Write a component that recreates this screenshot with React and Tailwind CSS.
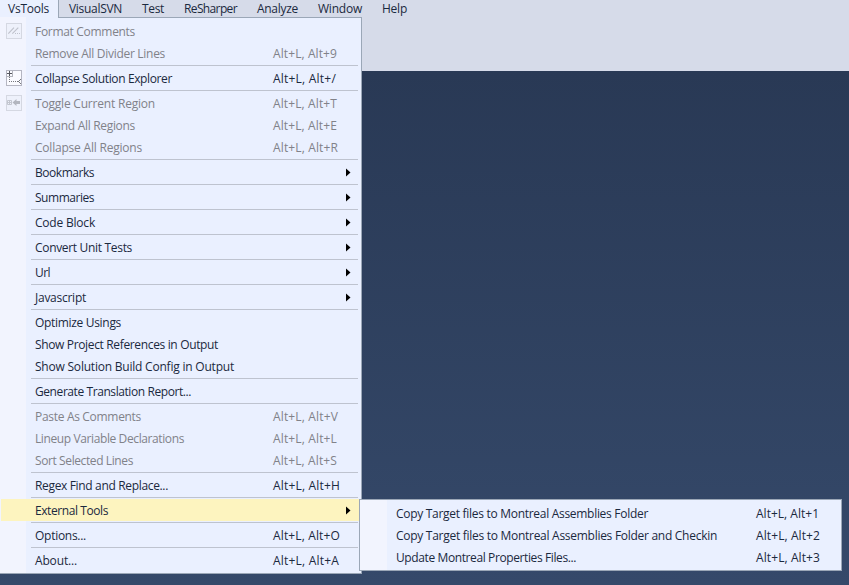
import { useLayoutEffect, useRef, useState } from "react";

const BEARING = 1;

// Text run whose tracking is tuned so that it spans `w` pixels, side bearing included.
function Label({ children, w }) {
  const ref = useRef(null);
  const [spacing, setSpacing] = useState(0);
  useLayoutEffect(() => {
    const natural = ref.current.getBoundingClientRect().width;
    setSpacing((w - BEARING - natural) / children.length);
  }, [children, w]);
  return (
    <span ref={ref} className="inline-block whitespace-pre pt-[2px] align-top" style={{ letterSpacing: spacing }}>
      {children}
    </span>
  );
}

const tabs = [
  ["VisualSVN", 54, "w-[73px]"],
  ["Test", 23, "w-[42px]"],
  ["ReSharper", 54, "w-[73px]"],
  ["Analyze", 42, "w-[61px]"],
  ["Window", 45, "w-[64px]"],
  ["Help", 26, "w-[45px]"],
];

const groups = [
  [
    { text: "Format Comments", w: 101, off: true, icon: "comment" },
    { text: "Remove All Divider Lines", w: 131, off: true, keys: "Alt+L, Alt+9", kw: 65 },
  ],
  [{ text: "Collapse Solution Explorer", w: 138, keys: "Alt+L, Alt+/", kw: 64, icon: "collapse" }],
  [
    { text: "Toggle Current Region", w: 121, off: true, keys: "Alt+L, Alt+T", kw: 65, icon: "toggle" },
    { text: "Expand All Regions", w: 101, off: true, keys: "Alt+L, Alt+E", kw: 65 },
    { text: "Collapse All Regions", w: 108, off: true, keys: "Alt+L, Alt+R", kw: 66 },
  ],
  [{ text: "Bookmarks", w: 60, sub: true }],
  [{ text: "Summaries", w: 60, sub: true }],
  [{ text: "Code Block", w: 61, sub: true }],
  [{ text: "Convert Unit Tests", w: 98, sub: true }],
  [{ text: "Url", w: 16, sub: true }],
  [{ text: "Javascript", w: 52, sub: true }],
  [
    { text: "Optimize Usings", w: 87 },
    { text: "Show Project References in Output", w: 184 },
    { text: "Show Solution Build Config in Output", w: 200 },
  ],
  [{ text: "Generate Translation Report...", w: 157 }],
  [
    { text: "Paste As Comments", w: 107, off: true, keys: "Alt+L, Alt+V", kw: 66 },
    { text: "Lineup Variable Declarations", w: 150, off: true, keys: "Alt+L, Alt+L", kw: 65 },
    { text: "Sort Selected Lines", w: 99, off: true, keys: "Alt+L, Alt+S", kw: 65 },
  ],
  [{ text: "Regex Find and Replace...", w: 134, keys: "Alt+L, Alt+H", kw: 68 }],
  [{ text: "External Tools", w: 74, sub: true, active: true }],
  [{ text: "Options...", w: 52, keys: "Alt+L, Alt+O", kw: 68 }],
  [{ text: "About...", w: 43, keys: "Alt+L, Alt+A", kw: 67 }],
];

const external = [
  ["Copy Target files to Montreal Assemblies Folder", 253, "Alt+L, Alt+1", 64],
  ["Copy Target files to Montreal Assemblies Folder and Checkin", 322, "Alt+L, Alt+2", 65],
  ["Update Montreal Properties Files...", 181, "Alt+L, Alt+3", 65],
];

function Icon({ kind }) {
  if (kind === "collapse")
    return (
      <svg width="16" height="16" shapeRendering="crispEdges" fill="none">
        <rect x=".5" y=".5" width="15" height="15" fill="#fafaff" stroke="#b5b6c2" />
        <path d="M1 3.5h5M3.5 1v5" stroke="#55565e" />
        <path d="M1 6.5h6M6.5 1v6" stroke="#b3b4bc" />
        <path d="M3.5 7v5M3 11.5h9" stroke="#77787e" strokeDasharray="1 1" />
        <path d="M14 9h1v1h-1zM13 10h1v1h-1zM12 11h1v1h-1zM13 12h1v1h-1zM14 13h1v1h-1z" fill="#77787e" />
      </svg>
    );
  return (
    <svg width="16" height="16" fill="none">
      <rect x=".5" y=".5" width="15" height="15" fill="#eef1fb" stroke="#d5d8e2" />
      {kind === "comment" ? (
        <>
          <path d="M2.3 10.7l5.7-6M6.3 10.7l6-6" stroke="#c0c3cd" strokeWidth="1.2" />
          <path d="M9 10.5h6" stroke="#c0c3cd" strokeDasharray="1 1" />
        </>
      ) : (
        <>
          <path d="M1.5 5.5h4v4h-4zM1 7.5h5M3.5 5v5" stroke="#c3c6cf" />
          <path d="M6.5 7.5L10.5 4v2H14v3h-3.500v2z" fill="#b3b6bf" />
        </>
      )}
    </svg>
  );
}

function Row({ item }) {
  return (
    <div className={`ml-px mr-[2px] flex h-[22px] items-center ${item.active ? "bg-[#fdf4bf]" : ""} ${item.off ? "text-[#818289]" : "text-[#1b293e]"}`}>
      <div className="w-[34px] shrink-0 pl-[5px]">{item.icon && <Icon kind={item.icon} />}</div>
      <div className="w-[238px] shrink-0">
        <Label w={item.w}>{item.text}</Label>
      </div>
      {item.keys && <Label w={item.kw}>{item.keys}</Label>}
      {item.sub && (
        <svg className="ml-[73px] mt-px" width="5" height="9" fill="#000">
          <path d="M0 .5l4.500 4L0 8.500z" />
        </svg>
      )}
    </div>
  );
}

export default function App() {
  return (
    <div className="relative flex h-[585px] w-[849px] flex-col overflow-hidden bg-[#d6dbe9] font-['Open_Sans',sans-serif] text-[12px] leading-[16px] text-[#1b293e]">
      <nav className="flex h-[17px] shrink-0 leading-[14px]">
        <div className="w-[59px] border-r border-[#9ba7b7] bg-[#eaf0ff] pl-2">
          <Label w={42}>VsTools</Label>
        </div>
        <div className="flex pl-[10px]">
          {tabs.map(([name, w, box]) => (
            <div key={name} className={box}>
              <Label w={w}>{name}</Label>
            </div>
          ))}
        </div>
      </nav>
      <div className="flex min-h-0 flex-1 flex-col">
        <div className="h-[54px] shrink-0" />
        <div className="flex-1 bg-gradient-to-b from-[#293955] to-[#35496a]" />
      </div>

      <div className="absolute left-0 top-[17px] flex w-[362px] flex-col border-r border-b border-[#9ba7b7] bg-[linear-gradient(to_right,#f2f4fe_26px,#eaf0ff_26px)] pb-[2px]">
        <div className="mb-[2px] ml-[58px] h-px bg-[#9ba7b7]" />
        {groups.map((group, i) => (
          <div key={i}>
            {i > 0 && <div className="my-px ml-[31px] mr-[3px] h-px bg-[#bec3cf]" />}
            {group.map((item) => (
              <Row key={item.text} item={item} />
            ))}
          </div>
        ))}
      </div>

      <div className="absolute left-[359px] top-[499px] w-[483px] border border-[#9ba7b7] bg-[linear-gradient(to_right,#f2f4fe_27px,#eaf0ff_27px)] py-[2px]">
        {external.map(([text, w, keys, kw]) => (
          <div key={text} className="flex h-[22px] items-center pl-9">
            <div className="w-[360px] shrink-0">
              <Label w={w}>{text}</Label>
            </div>
            <Label w={kw}>{keys}</Label>
          </div>
        ))}
      </div>
    </div>
  );
}
